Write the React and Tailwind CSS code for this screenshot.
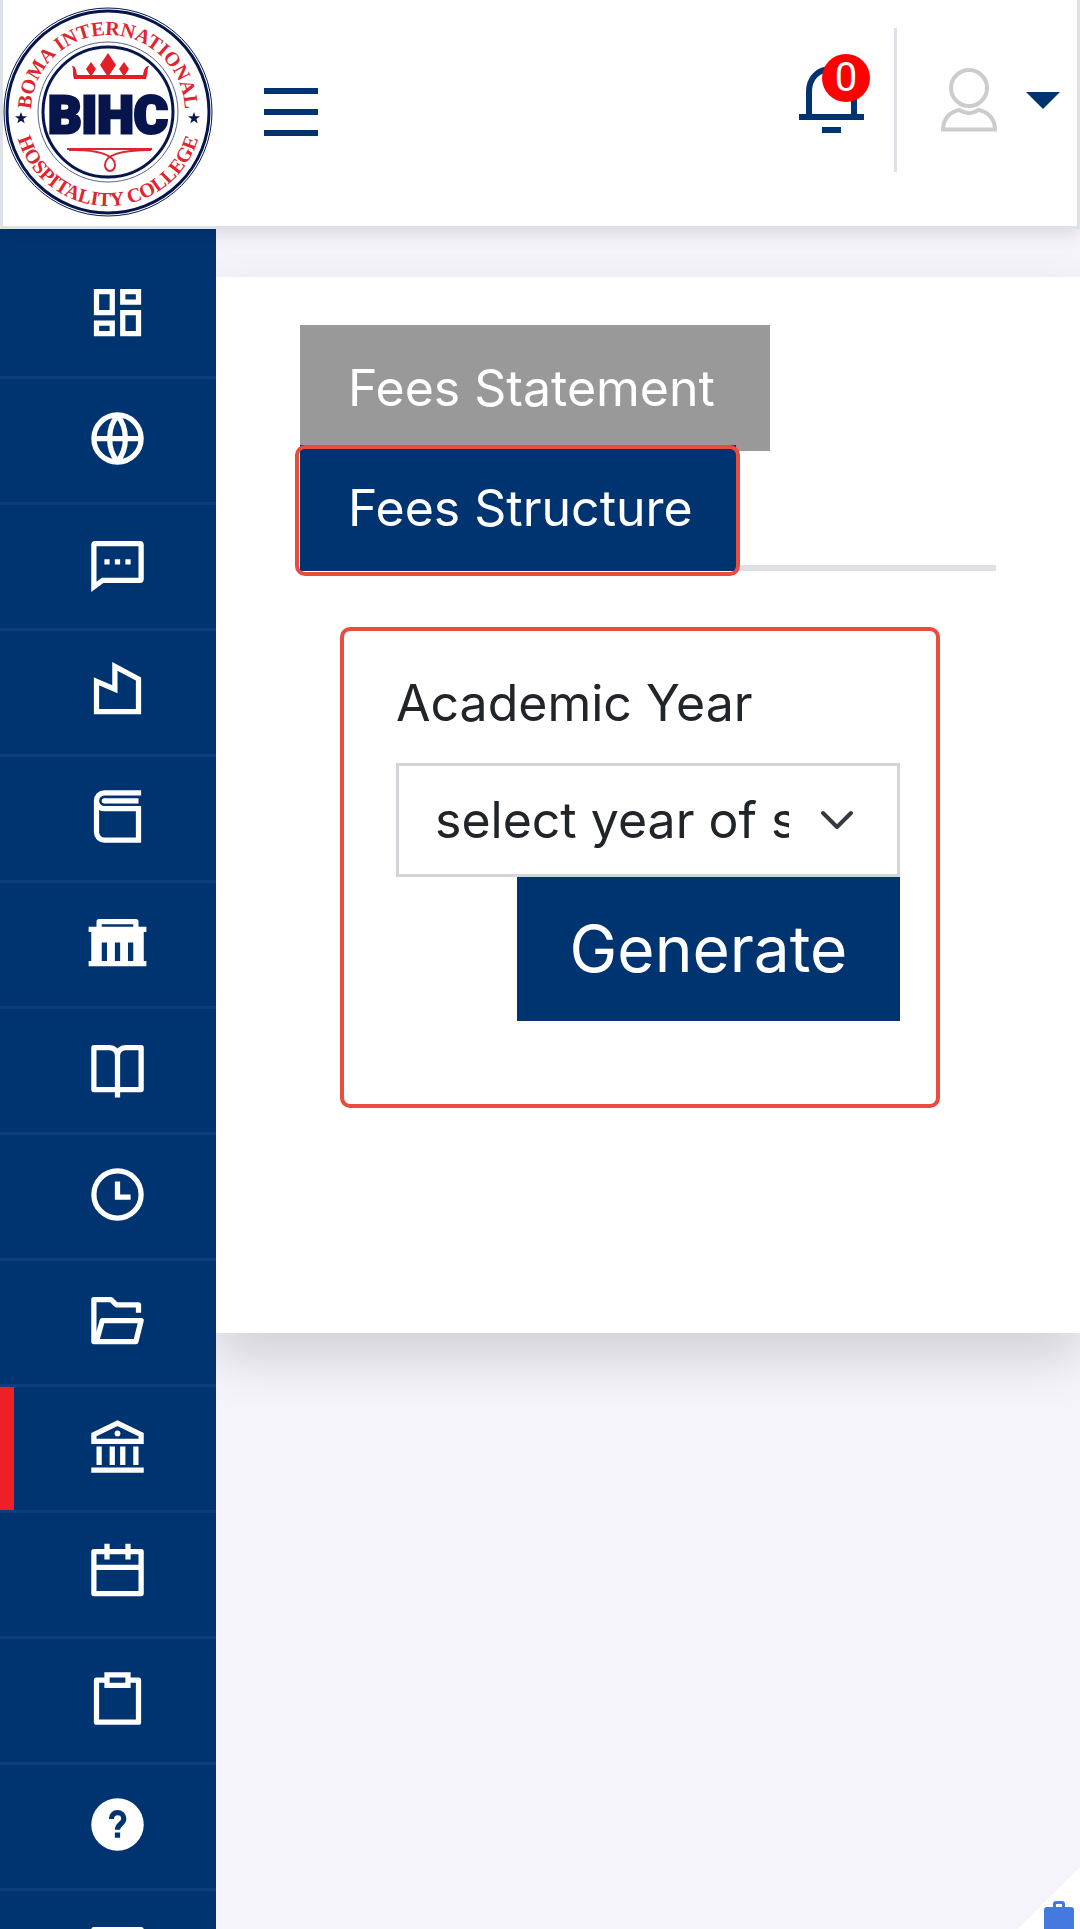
import React, { useState } from "react";

const MENU = [
  { name: "Dashboard", icon: "dashboard" },
  { name: "Website", icon: "globe" },
  { name: "Messages", icon: "message" },
  { name: "Departments", icon: "factory" },
  { name: "Courses", icon: "book" },
  { name: "Campus", icon: "museum" },
  { name: "Library", icon: "openBook" },
  { name: "Timetable", icon: "clock" },
  { name: "Files", icon: "folder" },
  { name: "Fees", icon: "bank" },
  { name: "Calendar", icon: "calendar" },
  { name: "Assignments", icon: "clipboard" },
  { name: "Help", icon: "help" },
  { name: "Inbox", icon: "box" },
];

const ICONS = {
  dashboard: (
    <path d="M4 4h6v8H4zM4 16h6v4H4zM14 4h6v4h-6zM14 12h6v8h-6z" />
  ),
  globe: (
    <>
      <circle cx="12" cy="12" r="9" />
      <path d="M3 12h18M12 3.3c-4 4.6-4 12.8 0 17.4M12 3.3c4 4.6 4 12.8 0 17.4" />
    </>
  ),
  message: (
    <>
      <path d="M20.5 4h-17a.5.5 0 0 0-.5.5V20.5L6.4 18H20.5a.5.5 0 0 0 .5-.5V4.5a.5.5 0 0 0-.5-.5z" />
      <path d="M7 11h2M11 11h2M15 11h2" />
    </>
  ),
  factory: <path d="M4 8.5l7 3V2.8l9 4.8V20H4z" />,
  book: (
    <>
      <path d="M21 3H7a3 3 0 0 0-3 3v12a3 3 0 0 0 3 3h13V9H7a3 3 0 0 1-3-3" />
      <path d="M7 6h13" />
      <circle cx="7" cy="6" r="1" fill="currentColor" stroke="none" />
    </>
  ),
  museum: (
    <path
      fill="currentColor"
      stroke="none"
      fillRule="evenodd"
      d="M5 3h14a1 1 0 0 1 1 1v2h3v2h-1v11h1v2H1v-2h1V8H1V6h3V4a1 1 0 0 1 1-1zM6 5v1h12V5zM6 12v7h2v-7zM11 12v7h2v-7zM16 12v7h2v-7z"
    />
  ),
  openBook: (
    <path
      strokeLinejoin="round"
      d="M12 23V7a3 3 0 0 0-3-3H3v16h18V4h-6a3 3 0 0 0-3 3"
    />
  ),
  clock: (
    <>
      <circle cx="12" cy="12" r="9" />
      <path d="M12 7v6h5" />
    </>
  ),
  folder: (
    <path
      strokeLinejoin="round"
      d="M20 9V6h-8.500l-2-2H3v16h16l2-8H6.200l-2.200 8"
    />
  ),
  bank: (
    <>
      <path d="M3 10V7.500l9-4.400 9 4.400V10z" />
      <path d="M5 12v7M10 12v7M14 12v7M19 12v7M2 21h20" />
      <circle cx="12" cy="7" r="1.100" fill="currentColor" stroke="none" />
    </>
  ),
  calendar: (
    <path strokeLinejoin="round" d="M3 4h18v16H3zM3 10h18M8 1v6M16 1v6" />
  ),
  clipboard: (
    <>
      <path d="M8 3h8v4H8z" />
      <path strokeLinejoin="round" d="M8 5H4v16h16V5h-4" />
    </>
  ),
  help: (
    <>
      <circle cx="12" cy="12" r="10" fill="currentColor" stroke="none" />
      <path
        stroke="#003471"
        d="M9.700 9.900C9.700 8.400 10.700 7.500 12 7.500s2.400 1 2.400 2.300c0 1.900-2.400 2-2.400 4.200M12 15v2"
      />
    </>
  ),
  box: <path strokeLinejoin="round" d="M3 4h18v16H3z" />,
};

function MenuIcon({ name }) {
  return (
    <svg
      viewBox="0 0 24 24"
      className="size-[63px]"
      fill="none"
      stroke="currentColor"
      strokeWidth="2"
      aria-hidden="true"
    >
      {ICONS[name]}
    </svg>
  );
}

function Logo() {
  return (
    <svg viewBox="0 0 210 210" className="size-[210px]" role="img" aria-label="Boma International Hospitality College">
      <defs>
        <path id="arcTop" d="M28 105a77 77 0 0 1 154 0" />
        <path id="arcBottom" d="M11 105a94 94 0 0 0 188 0" />
      </defs>
      <g fill="none" stroke="#06164c">
        <circle cx="105" cy="105" r="104" strokeWidth="1" />
        <circle cx="105" cy="105" r="101" strokeWidth="3" />
        <circle cx="105" cy="105" r="70" strokeWidth="1" stroke="#5b6487" />
        <circle cx="105" cy="105" r="65" strokeWidth="3" />
      </g>

      <g fill="#dd2630" className="font-['Liberation_Serif',serif]" textAnchor="middle">
        <text className="text-[20px] font-bold">
          <textPath href="#arcTop" startOffset="50%">BOMA INTERNATIONAL</textPath>
        </text>
        <text className="text-[20px] font-bold">
          <textPath href="#arcBottom" startOffset="50%">HOSPITALITY COLLEGE</textPath>
        </text>
      </g>

      {/* stars */}
      <g fill="#06164c">
        <path id="star" d="M18 105l1.500 4.200 4.500.1-3.600 2.700 1.300 4.300-3.700-2.500-3.700 2.500 1.300-4.300-3.600-2.700 4.500-.1z" />
        <use href="#star" x="173" />
      </g>

      {/* crown */}
      <g fill="#e31e26">
        <path d="M105 46l8 12-8 12-8-12zM88 55l5 7-5 7.500-5-7.500zM121 55l5 7-5 7.500-5-7.500z" />
        <path d="M69 59c3 0 4 2 5 9h66c1-7 3-9 6-9-2 3-1 7-3 13H71c-2-6 0-9-2-13z" />
      </g>

      <text
        x="105"
        y="126"
        textAnchor="middle"
        fill="#06164c"
        stroke="#06164c"
        strokeWidth="3"
        className="font-['Roboto',sans-serif] text-[52px] font-black"
      >
        BIHC
      </text>

      {/* flourish */}
      <path
        d="M64 142h85M66 143c28-1 46 5 46 15a5 6 0 0 1-10 0c0-10 16-15 46-15"
        fill="none"
        stroke="#dd2630"
        strokeWidth="2"
      />
    </svg>
  );
}

function Header() {
  return (
    <header className="relative z-10 flex items-start border-x-[3px] border-b-[3px] border-[#dee2e6] bg-white pb-2 pt-[7px] shadow-[0_6px_16px_rgba(0,0,0,0.1)]">
      <a href="#home" className="mb-px block">
        <Logo />
      </a>

      <button type="button" aria-label="Toggle menu" className="ml-[51px] mt-[81px] flex w-[54px] flex-col gap-[15px]">
        <span className="h-1.5 w-full bg-[#003471]" />
        <span className="h-1.5 w-full bg-[#003471]" />
        <span className="h-1.5 w-full bg-[#003471]" />
      </button>

      <div className="ml-auto mt-[21px] flex h-36 items-center">
        <button type="button" aria-label="Notifications" className="relative mr-[30px]">
          <svg viewBox="0 0 65 68" className="h-[68px] w-[65px]" fill="none" stroke="#003471" strokeWidth="6">
            <path d="M10 49V26C10 12 19 3 32.500 3S55 12 55 26v23M0 51h65M23 64h19" />
          </svg>
          <span className="absolute -right-1.5 -top-3 flex size-12 items-center justify-center rounded-full bg-[#ff0000] font-['Roboto',sans-serif] text-[40px] leading-none text-white">
            0
          </span>
        </button>

        <span className="h-full w-[3px] bg-[#dee2e6]" />

        <button type="button" aria-label="Account" className="ml-11 mr-[17px] flex items-center gap-[29px]">
          <svg viewBox="0 0 56 64" className="h-16 w-14" fill="none" stroke="#ccc" strokeWidth="4">
            <circle cx="28" cy="20" r="18" />
            <path d="M2 61.500C2 51 9 43.500 18.500 42c6 4 13 4 19 0C47 43.500 54 51 54 61.500z" />
          </svg>
          <svg viewBox="0 0 34 17" className="h-[17px] w-[34px]">
            <path d="M0 0h34L17 17z" fill="#003471" />
          </svg>
        </button>
      </div>
    </header>
  );
}

function Sidebar() {
  return (
    <nav className="w-[216px] shrink-0 overflow-hidden bg-[#003471] pt-6 text-white">
      {MENU.map((item) => (
        <a
          key={item.name}
          href={`#${item.icon}`}
          aria-label={item.name}
          className="relative block h-[126px] border-b-[3px] border-white/5 pl-[86px] pt-7"
        >
          {item.icon === "bank" && (
            <span className="absolute inset-y-0 left-0 w-3.5 bg-[#ee1f25]" />
          )}
          <MenuIcon name={item.icon} />
        </a>
      ))}
    </nav>
  );
}

export default function App() {
  const [year, setYear] = useState("");

  return (
    <div className="relative flex h-screen flex-col overflow-hidden bg-[#f4f4fa] font-['Inter',sans-serif] text-[#212529]">
      <Header />

      <div className="flex min-h-0 flex-1">
        <Sidebar />

        <main className="min-w-0 flex-1 overflow-hidden pt-12">
          <section className="bg-white px-[84px] pb-[225px] pt-12 shadow-[0_24px_48px_rgba(0,0,0,0.15)]">
            {/* Tabs */}
            <div role="tablist" className="flex flex-col items-start border-b-[6px] border-[#dfe0e6]">
              <button
                type="button"
                role="tab"
                aria-selected="false"
                className="-mb-1.5 h-[126px] min-w-[470px] bg-[#999] px-12 text-left text-[50px] leading-[72px] text-white"
              >
                Fees Statement
              </button>
              <button
                type="button"
                role="tab"
                aria-selected="true"
                className="relative -mb-1.5 h-[126px] min-w-[436px] bg-[#003471] pl-12 pr-10 text-left text-[50px] leading-[72px] text-white"
              >
                Fees Structure
                <span className="absolute -bottom-[5px] -left-[5px] -right-1 top-0 rounded-[10px] border-4 border-[#e74c3c]" />
              </button>
            </div>

            <form
              onSubmit={(e) => e.preventDefault()}
              className="ml-10 mr-14 mt-14 rounded-[10px] border-4 border-[#e74c3c] pb-[83px] pl-[52px] pr-9 pt-9"
            >
              <label htmlFor="year" className="mb-6 block text-[50px] leading-[72px]">
                Academic Year
              </label>
              <div className="relative">
                <select
                  id="year"
                  value={year}
                  onChange={(e) => setYear(e.target.value)}
                  className="block h-[114px] w-full appearance-none border-[3px] border-[#d2d4d8] bg-white pl-9 pr-[108px] text-[50px] leading-[72px]"
                >
                  <option value="">select year of study</option>
                  <option value="1">2023/2024</option>
                  <option value="2">2024/2025</option>
                </select>
                <svg
                  viewBox="0 0 36 24"
                  className="pointer-events-none absolute right-[45px] top-[45px] h-6 w-9"
                  fill="none"
                  stroke="#343a40"
                  strokeWidth="4"
                  strokeLinecap="round"
                  strokeLinejoin="round"
                >
                  <path d="M4 5l14 14L32 5" />
                </svg>
              </div>
              <button
                type="submit"
                className="ml-auto block h-36 min-w-[383px] bg-[#003471] px-12 text-[64px] leading-[72px] text-white"
              >
                Generate
              </button>
            </form>
          </section>
        </main>
      </div>

      {/* Corner widget */}
      <button type="button" aria-label="Open tools" className="absolute bottom-0 right-0">
        <svg viewBox="0 0 62 62" className="size-[62px]">
          <path d="M62 0v62H0z" fill="#fff" />
          <path d="M26 62V43q0-3 3-3h6v-3q0-3 3-3h6q3 0 3 3v3h6q3 0 3 3v19zM38 40h6v-3h-6z" fill="#4479e0" fillRule="evenodd" />
        </svg>
      </button>
    </div>
  );
}
